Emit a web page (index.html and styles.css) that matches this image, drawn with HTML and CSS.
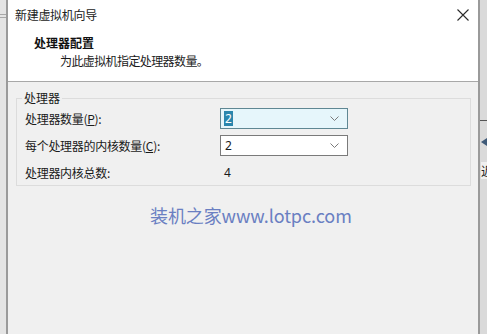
FILE: index.html
```html
<!DOCTYPE html>
<html lang="zh-CN">
<head>
<meta charset="utf-8">
<title>新建虚拟机向导</title>
<link rel="stylesheet" href="styles.css">
</head>
<body>
<div class="screen">
  <div class="side-left"><span class="ln"></span><span class="ln"></span></div>
  <div class="dialog">
    <div class="titlebar">
      <span class="title">新建虚拟机向导</span>
      <svg class="close" width="12" height="12" viewBox="0 0 12 12"><path d="M0.5 0.5L11.5 11.5M11.5 0.5L0.5 11.5" stroke="#2b2b2b" stroke-width="1.1" fill="none"/></svg>
    </div>
    <div class="header">
      <div class="h-title">处理器配置</div>
      <div class="h-sub">为此虚拟机指定处理器数量。</div>
    </div>
    <div class="body">
      <div class="group">
        <div class="legend">处理器</div>
        <div class="rows">
          <div class="label">处理器数量(<u>P</u>):</div>
          <div class="combo focus"><span class="sel">2</span><svg class="chev" width="9" height="5" viewBox="0 0 9 5"><path d="M0.5 0.5L4.5 4.5L8.5 0.5" stroke="#7a7a7a" fill="none"/></svg></div>
          <div class="label">每个处理器的内核数量(<u>C</u>):</div>
          <div class="combo"><span class="val">2</span><svg class="chev" width="9" height="5" viewBox="0 0 9 5"><path d="M0.5 0.5L4.5 4.5L8.5 0.5" stroke="#7a7a7a" fill="none"/></svg></div>
          <div class="label">处理器内核总数:</div>
          <div class="total">4</div>
        </div>
      </div>
      <div class="watermark">装机之家www.lotpc.com</div>
    </div>
  </div>
  <div class="side-right"><span class="rl"></span><span class="ricon"></span><span class="rtext">近</span></div>
</div>
</body>
</html>
```

FILE: styles.css
```css
html, body {
  margin: 0;
  padding: 0;
}
body {
  width: 487px;
  height: 334px;
  overflow: hidden;
  background: #e8e8e8;
  font-family: "Noto Sans CJK SC", "Microsoft YaHei", sans-serif;
  font-size: 12px;
  color: #1a1a1a;
}
.screen {
  display: flex;
  height: 334px;
}
.side-left {
  width: 6px;
  background: #e4e4e4;
  display: flex;
  flex-direction: column;
  padding-top: 14px;
  gap: 2px;
  box-sizing: border-box;
}
.side-left .ln {
  display: block;
  height: 1px;
  background: #a8a8a8;
}
.dialog {
  width: 470px;
  border-left: 2px solid #9a9a9a;
  border-right: 2px solid #9a9a9a;
  background: #f0f0f0;
  display: flex;
  flex-direction: column;
}
.titlebar {
  height: 28px;
  background: #fff;
  display: flex;
  align-items: center;
  justify-content: space-between;
  padding: 0 9px 0 7px;
}
.title {
  font-size: 12px;
  color: #222;
  letter-spacing: -0.3px;
}
.close {
  margin-top: 2px;
}
.header {
  height: 54px;
  background: #fff;
  border-bottom: 1px solid #a8a8a8;
  box-sizing: border-box;
  padding: 6px 0 0 26px;
}
.h-title {
  font-weight: bold;
  font-size: 12px;
  line-height: 18px;
  color: #111;
}
.h-sub {
  font-size: 12px;
  line-height: 18px;
  padding-left: 26px;
  letter-spacing: -0.6px;
}
.body {
  flex: 1;
  padding: 16px 7px 0 8px;
  display: flex;
  flex-direction: column;
}
.group {
  position: relative;
  border: 1px solid #dcdcdc;
  height: 88px;
  box-sizing: border-box;
  padding: 6px 0 0 8px;
}
.legend {
  position: absolute;
  left: 5px;
  top: -9px;
  padding: 0 2px;
  background: #f0f0f0;
  line-height: 16px;
}
.rows {
  display: grid;
  grid-template-columns: 195px 128px;
  grid-auto-rows: 27px;
  align-items: center;
}
.label {
  color: #1a1a1a;
  letter-spacing: -0.3px;
}
.label u {
  text-decoration: underline;
  text-underline-offset: 1px;
}
.combo {
  height: 21px;
  box-sizing: border-box;
  border: 1px solid #7a7a7a;
  background: #fff;
  display: flex;
  align-items: center;
  justify-content: space-between;
  padding: 0 8px 0 3px;
  font-family: "Segoe UI", "Noto Sans", sans-serif;
  font-size: 12px;
}
.combo.focus {
  border-color: #5f8793;
  background: #e6f6fb;
}
.sel {
  background: #2a86ad;
  color: #fff;
  padding: 0 1px;
  line-height: 15px;
}
.val {
  padding-left: 1px;
}
.total {
  padding-left: 4px;
  font-family: "Noto Sans", sans-serif;
  font-size: 12px;
}
.watermark {
  margin: 17px 0 0 134px;
  font-size: 18px;
  color: #6a7fc2;
  line-height: 24px;
  letter-spacing: -0.1px;
}
.side-right {
  flex: 1;
  position: relative;
  background: #dadada;
  overflow: hidden;
}
.rl {
  position: absolute;
  left: 0;
  right: 0;
  top: 120px;
  height: 1px;
  background: #555;
}
.ricon {
  position: absolute;
  left: 1px;
  top: 138px;
  width: 6px;
  height: 8px;
  background: #3f5a78;
  clip-path: polygon(100% 0, 0 50%, 100% 100%);
}
.rtext {
  position: absolute;
  left: 1px;
  top: 162px;
  font-size: 12px;
  color: #222;
  background: #f0f0f0;
}
```
